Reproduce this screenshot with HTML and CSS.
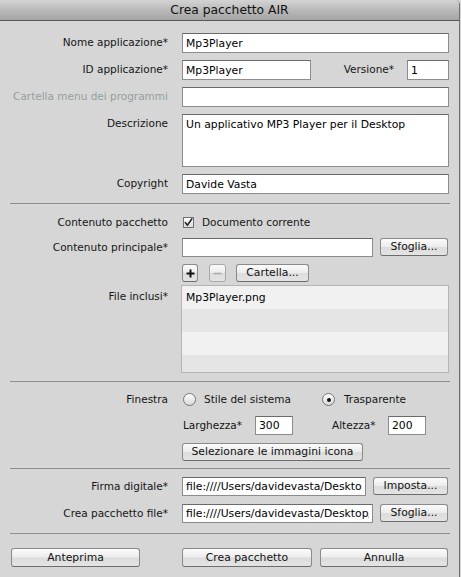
FILE: index.html
```html
<!DOCTYPE html>
<html lang="it">
<head>
<meta charset="utf-8">
<title>Crea pacchetto AIR</title>
<link rel="stylesheet" href="styles.css">
</head>
<body>
<div class="window">
  <div class="titlebar">Crea pacchetto AIR</div>
  <div class="content">
    <div class="row r-nome">
      <span class="lbl">Nome applicazione*</span>
      <div class="ctl"><input class="field w-full" value="Mp3Player"></div>
    </div>
    <div class="row r-std">
      <span class="lbl">ID applicazione*</span>
      <div class="ctl">
        <input class="field w-id" value="Mp3Player">
        <span class="inline-lbl ver">Versione*</span>
        <input class="field w-ver" value="1">
      </div>
    </div>
    <div class="row r-std">
      <span class="lbl disabled">Cartella menu dei programmi</span>
      <div class="ctl"><input class="field w-full" value=""></div>
    </div>
    <div class="row r-std">
      <span class="lbl">Descrizione</span>
      <div class="ctl"><div class="field area w-full">Un applicativo MP3 Player per il Desktop</div></div>
    </div>
    <div class="row r-std">
      <span class="lbl">Copyright</span>
      <div class="ctl"><input class="field w-full" value="Davide Vasta"></div>
    </div>

    <div class="sep s1"></div>

    <div class="row r-check">
      <span class="lbl">Contenuto pacchetto</span>
      <div class="ctl">
        <span class="checkbox"><svg width="11" height="11" viewBox="0 0 11 11"><path d="M2.3 5.6 L4.4 8.3 L8.9 1.8" fill="none" stroke="#2a2a2a" stroke-width="1.6" stroke-linecap="round" stroke-linejoin="round"/></svg></span>
        <span class="opt-text">Documento corrente</span>
      </div>
    </div>
    <div class="row r-main">
      <span class="lbl">Contenuto principale*</span>
      <div class="ctl">
        <input class="field short w-main" value="">
        <button class="btn w-sfoglia">Sfoglia...</button>
      </div>
    </div>
    <div class="row r-tools">
      <span class="lbl"></span>
      <div class="ctl">
        <button class="btn sq plus"><svg width="9" height="9" viewBox="0 0 9 9"><path d="M4.5 0.5 V8.5 M0.5 4.5 H8.5" stroke="#111" stroke-width="2"/></svg></button>
        <button class="btn sq minus"><svg width="9" height="9" viewBox="0 0 9 9"><path d="M0.5 4.5 H8.5" stroke="#a8a8a8" stroke-width="1.5"/></svg></button>
        <button class="btn w-cartella">Cartella...</button>
      </div>
    </div>
    <div class="row r-list">
      <span class="lbl list-lbl">File inclusi*</span>
      <div class="ctl">
        <div class="list">
          <div class="list-row odd">Mp3Player.png</div>
          <div class="list-row even"></div>
          <div class="list-row odd"></div>
          <div class="list-row even"></div>
        </div>
      </div>
    </div>

    <div class="sep s2"></div>

    <div class="row r-radio">
      <span class="lbl">Finestra</span>
      <div class="ctl">
        <span class="opt opt-1"><span class="radio"></span><span class="opt-text">Stile del sistema</span></span>
        <span class="opt"><span class="radio on"><span class="dot"></span></span><span class="opt-text wide">Trasparente</span></span>
      </div>
    </div>
    <div class="row r-size">
      <span class="lbl"></span>
      <div class="ctl">
        <span class="inline-lbl larg">Larghezza*</span>
        <input class="field short w-num" value="300">
        <span class="inline-lbl alt">Altezza*</span>
        <input class="field short w-num" value="200">
      </div>
    </div>
    <div class="row r-icons">
      <span class="lbl"></span>
      <div class="ctl"><button class="btn w-icone">Selezionare le immagini icona</button></div>
    </div>

    <div class="sep s3"></div>

    <div class="row r-firma">
      <span class="lbl">Firma digitale*</span>
      <div class="ctl">
        <input class="field short w-firma" value="file:////Users/davidevasta/Desktop/certificato.p12">
        <button class="btn w-imposta">Imposta...</button>
      </div>
    </div>
    <div class="row r-file">
      <span class="lbl">Crea pacchetto file*</span>
      <div class="ctl">
        <input class="field short w-main" value="file:////Users/davidevasta/Desktop/Mp3Player.air">
        <button class="btn w-sfoglia">Sfoglia...</button>
      </div>
    </div>

    <div class="sep s4"></div>

    <div class="footer">
      <button class="btn big b-ante">Anteprima</button>
      <button class="btn big b-crea">Crea pacchetto</button>
      <button class="btn big b-ann">Annulla</button>
    </div>
  </div>
</div>
</body>
</html>
```

FILE: styles.css
```css
html, body {
  margin: 0;
  padding: 0;
  background: #d6d6d6;
}

body {
  font-family: "DejaVu Sans", "Liberation Sans", sans-serif;
  font-size: 10.5px;
  color: #151515;
}

.window {
  width: 459px;
  height: 577px;
  background: #d6d6d6;
  border-right: 1px solid #6e6e6e;
  border-top-right-radius: 5px;
  overflow: hidden;
}

.titlebar {
  height: 20px;
  line-height: 20px;
  border-bottom: 1px solid #585858;
  background: linear-gradient(#d4d4d4, #bcbcbc 45%, #a4a4a4);
  text-align: center;
  font-size: 12.3px;
  color: #111;
}

.content {
  display: flex;
  flex-direction: column;
}

.row {
  display: flex;
  align-items: flex-start;
}

.lbl {
  flex: none;
  width: 168px;
  text-align: right;
  line-height: 18px;
  white-space: nowrap;
}

.lbl.disabled {
  color: #959e9e;
}

.ctl {
  flex: none;
  margin-left: 14px;
  width: 267px;
  display: flex;
  align-items: flex-start;
}

/* rows vertical rhythm */
.r-nome { margin-top: 12px; }
.r-std { margin-top: 7px; }
.s1 { margin-top: 9px; }
.r-check { margin-top: 10px; height: 17px; }
.r-main { margin-top: 7px; }
.r-tools { margin-top: 7px; }
.r-list { margin-top: 3px; }
.s2 { margin-top: 8px; }
.r-radio { margin-top: 9px; height: 17px; }
.r-size { margin-top: 8px; }
.r-icons { margin-top: 8px; }
.s3 { margin-top: 7px; }
.r-firma { margin-top: 8px; }
.r-file { margin-top: 8px; }
.s4 { margin-top: 10px; }

.r-check .lbl, .r-radio .lbl { line-height: 17px; }
.list-lbl { padding-top: 2px; }

/* fields */
.field {
  box-sizing: border-box;
  height: 20px;
  margin: 0;
  padding: 0 3px;
  border: 1px solid #8c8c8c;
  border-top-color: #6a6a6a;
  border-radius: 0;
  background: #fff;
  font-family: inherit;
  font-size: 10.8px;
  color: #000;
  outline: none;
}

.field.short { height: 19px; }

.area {
  height: 53px;
  padding: 3px 3px;
  line-height: 13px;
}

.w-full { width: 267px; }
.w-id { width: 129px; }
.w-ver { width: 42px; }
.w-main { width: 191px; }
.w-num { width: 38px; }
.w-firma { width: 184px; }

.inline-lbl {
  line-height: 18px;
  white-space: nowrap;
}

.ver {
  flex: 1;
  text-align: right;
  padding-right: 13px;
}

.larg { margin-left: 1px; width: 72px; }
.alt { margin-left: 39px; width: 56px; }

/* buttons */
.btn {
  box-sizing: border-box;
  height: 18px;
  margin: 0;
  padding: 0;
  border: 1px solid #8a8a8a;
  border-bottom-color: #6c6c6c;
  border-radius: 3px;
  background: linear-gradient(#fbfbfb, #ececec 48%, #dcdcdc 52%, #e4e4e4);
  font-family: inherit;
  font-size: 10.8px;
  color: #111;
  text-align: center;
  line-height: 16px;
  white-space: nowrap;
}

.w-sfoglia { width: 68px; margin-left: 7px; }
.w-imposta { width: 75px; margin-left: 7px; }
.w-cartella { width: 73px; margin-left: 10px; }
.w-icone { width: 181px; }

.sq {
  width: 16px;
  display: flex;
  align-items: center;
  justify-content: center;
}

.minus {
  width: 17px;
  margin-left: 11px;
  border-color: #a8a8a8;
}

.btn.big { height: 19px; line-height: 17px; }

.footer {
  margin-top: 14px;
  display: flex;
}

.b-ante { margin-left: 11px; width: 129px; }
.b-crea { margin-left: 42px; width: 130px; }
.b-ann { margin-left: 8px; width: 128px; }

/* check + radio */
.checkbox {
  box-sizing: border-box;
  width: 11px;
  height: 11px;
  margin: 3px 0 0 1px;
  border: 1px solid #707070;
  background: linear-gradient(#ffffff, #dedede);
  display: flex;
  align-items: center;
  justify-content: center;
  overflow: visible;
}

.checkbox svg { flex: none; }

.opt-text {
  margin-left: 8px;
  line-height: 17px;
  white-space: nowrap;
}

.opt-text.wide { margin-left: 9px; }

.opt {
  display: flex;
  align-items: flex-start;
}

.opt-1 { width: 139px; margin-left: 1px; }

.radio {
  box-sizing: border-box;
  width: 13px;
  height: 13px;
  margin-top: 2px;
  border: 1px solid #767676;
  border-radius: 50%;
  background: linear-gradient(#ffffff, #d9d9d9);
  display: flex;
  align-items: center;
  justify-content: center;
}

.dot {
  width: 4px;
  height: 4px;
  border-radius: 50%;
  background: #111;
}

/* list */
.list {
  box-sizing: border-box;
  width: 268px;
  height: 88px;
  margin-left: -1px;
  border: 1px solid #b4b4b4;
  background: #e6e6e6;
  overflow: hidden;
}

.list-row {
  height: 23px;
  line-height: 23px;
  padding-left: 4px;
  color: #000;
  font-size: 10.8px;
}

.list-row.odd { background: #f1f1f1; }
.list-row.even { background: #e5e5e5; }

/* separators */
.sep {
  margin-left: 10px;
  width: 440px;
  height: 0;
  border-top: 1px solid #8e8e8e;
}
```
